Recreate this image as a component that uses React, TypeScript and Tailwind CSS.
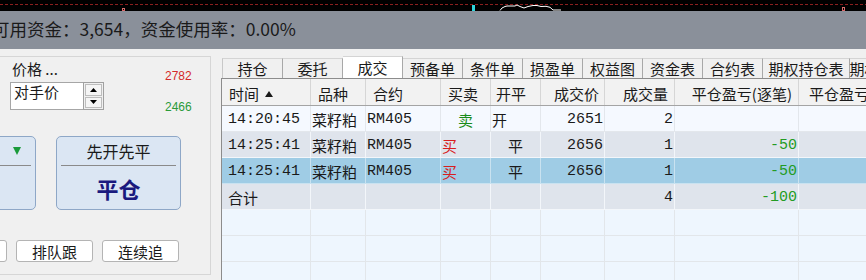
const mono = "font-['Liberation_Mono',monospace] text-[13px]";

const colW = [
  "w-[89px]",
  "w-[55px]",
  "w-[75px]",
  "w-[50px]",
  "w-[50px]",
  "w-[64px]",
  "w-[70px]",
  "w-[124px]",
  "w-[124px]",
];

type Cell = { t?: string; k?: string };
type Row = { bg: string; line: string; cells: Cell[] };

const header: Cell[] = [
  { t: "时间", k: "pl-[7px]" },
  { t: "品种", k: "pl-[7px]" },
  { t: "合约", k: "pl-[7px]" },
  { t: "买卖", k: "pl-[7px]" },
  { t: "开平", k: "pl-[5px]" },
  { t: "成交价", k: "justify-end pr-[5px]" },
  { t: "成交量", k: "justify-end pr-[6px]" },
  { t: "平仓盈亏(逐笔)", k: "justify-end pr-[6px]" },
  { t: "平仓盈亏(逐日)", k: "pl-[10px]" },
];

const trade = (time: string, side: Cell, oc: Cell, price: string, vol: string, pnl: string): Cell[] => [
  { t: time, k: `${mono} pl-[6px]` },
  { t: "菜籽粕", k: "pl-[1px]" },
  { t: "RM405", k: `${mono} pl-[1px]` },
  side,
  oc,
  { t: price, k: `${mono} justify-end pr-[1px]` },
  { t: vol, k: `${mono} justify-end pr-[1px]` },
  { t: pnl, k: `${mono} justify-end pr-[1px] text-[#239b23]` },
  {},
];

const rows: Row[] = [
  {
    bg: "bg-[#f5f9ff]",
    line: "border-[#e3e7ec]",
    cells: trade(
      "14:20:45",
      { t: "卖", k: "justify-center text-[#1a8c1a]" },
      { t: "开", k: "pl-[1px]" },
      "2651",
      "2",
      ""
    ),
  },
  {
    bg: "bg-[#dfe4ec]",
    line: "border-[#f3f6fa]",
    cells: trade(
      "14:25:41",
      { t: "买", k: "pl-[1px] text-[#d81e1e]" },
      { t: "平", k: "justify-center" },
      "2656",
      "1",
      "-50"
    ),
  },
  {
    bg: "bg-[#9fcce5]",
    line: "border-[#c9e2f0]",
    cells: trade(
      "14:25:41",
      { t: "买", k: "pl-[1px] text-[#d81e1e]" },
      { t: "平", k: "justify-center" },
      "2656",
      "1",
      "-50"
    ),
  },
  {
    bg: "bg-[#dfe4ec]",
    line: "border-[#f3f6fa]",
    cells: [
      { t: "合计", k: "pl-[6px]" },
      {},
      {},
      {},
      {},
      {},
      { t: "4", k: `${mono} justify-end pr-[1px]` },
      { t: "-100", k: `${mono} justify-end pr-[1px] text-[#239b23]` },
      {},
    ],
  },
];

const emptyRow: Row = {
  bg: "bg-[#eef6fe]",
  line: "border-[#e2e6ea]",
  cells: Array.from({ length: 9 }, () => ({})),
};

const tabs = [
  "持仓",
  "委托",
  "成交",
  "预备单",
  "条件单",
  "损盈单",
  "权益图",
  "资金表",
  "合约表",
  "期权持仓表",
  "期权成交",
];

function TopStrip() {
  return (
    <div className="h-[11px] bg-black">
      <svg width="866" height="11" className="block">
        <line x1="0" y1="4.5" x2="866" y2="4.5" stroke="#8b1f1f" strokeDasharray="3 2" />
        <rect x="122.5" y="8.5" width="2" height="2.5" fill="none" stroke="#d86a6a" />
        <rect x="472" y="5" width="3" height="6" fill="#2fd4dc" />
        <polyline
          points="500,10.5 502,8 505,6.5 507,6 515,6 517,5 520,6.5 524,8 528,6.5 533,5.5 537,5.5 541,6.5 546,6.3 550,7.3 553,10 561,10"
          fill="none"
          stroke="#ffffff"
        />
        <rect x="842.5" y="7.5" width="2" height="3.5" fill="none" stroke="#d86a6a" />
      </svg>
    </div>
  );
}

function Combo() {
  return (
    <div className="mt-[1px] flex h-[28px] w-[94px]">
      <div className="w-[73px] bg-white border border-r-0 border-[#a6a6a6] pl-[3px] text-[15px] leading-[18px]">
        对手价
      </div>
      <div className="w-[21px] border border-[#a0a0a0] bg-[#f0f0f0] flex flex-col p-[1px] gap-[1px]">
        <div className="flex-1 border border-[#bdbdbd] bg-[#f5f5f5] flex items-center justify-center">
          <svg width="7" height="4">
            <path d="M3.5 0L7 4H0Z" fill="#000" />
          </svg>
        </div>
        <div className="flex-1 border border-[#bdbdbd] bg-[#f5f5f5] flex items-center justify-center">
          <svg width="7" height="4">
            <path d="M0 0H7L3.5 4Z" fill="#000" />
          </svg>
        </div>
      </div>
    </div>
  );
}

function BigButton({ top, topCls, bottom }: { top: React.ReactNode; topCls: string; bottom: string }) {
  return (
    <div className="w-[125px] h-[74px] shrink-0 rounded-[5px] border border-[#8ea7c7] bg-[#dbe6f3] flex flex-col">
      <div className={`h-[28px] flex items-center text-[16px] leading-none ${topCls}`}>{top}</div>
      <div className="mx-[4px] h-px bg-[#8a8a8a]" />
      <div className="flex-1 flex items-center justify-center text-[22px] font-bold leading-none text-[#1a1a7e]">
        {bottom}
      </div>
    </div>
  );
}

function LeftPanel() {
  return (
    <div className="mt-[7px] w-[211px] h-[219px] shrink-0 border-t border-r border-b border-[#d6d6d6] overflow-hidden">
      <div className="flex h-[53px]">
        <div className="w-[165px] pl-[10px]">
          <div className="h-[24px] leading-[24px] pl-[2px] text-[15px]">价格 ...</div>
          <Combo />
        </div>
        <div className="flex flex-col pt-[11px] gap-[15px] text-[12px] leading-[16px] font-['Liberation_Sans',sans-serif]">
          <span className="text-[#d42a2a]">2782</span>
          <span className="text-[#2a9a3a]">2466</span>
        </div>
      </div>

      <div className="mt-[26px] -ml-[89px] flex gap-[20px]">
        <BigButton
          topCls="justify-end pr-[14px]"
          top={
            <svg width="8" height="8">
              <path d="M0 0H8L4 8Z" fill="#1a9a3a" />
            </svg>
          }
          bottom=""
        />
        <BigButton topCls="justify-center" top="先开先平" bottom="平仓" />
      </div>

      <div className="mt-[30px] -ml-[70px] flex gap-[9px]">
        {["", "排队跟", "连续追"].map((b, i) => (
          <div
            key={i}
            className="w-[77px] h-[22px] shrink-0 rounded-[3px] border border-[#b4b4b4] bg-white flex items-center justify-center text-[15px] leading-none"
          >
            {b}
          </div>
        ))}
      </div>
    </div>
  );
}

function TableRow({ row }: { row: Row }) {
  return (
    <div className={`flex h-[26px] border-b ${row.line} ${row.bg}`}>
      {row.cells.map((c, i) => (
        <div
          key={i}
          className={`${colW[i]} shrink-0 h-full border-r ${row.line} flex items-center pt-[2px] text-[15px] leading-none whitespace-nowrap ${c.k ?? ""}`}
        >
          {c.t}
        </div>
      ))}
    </div>
  );
}

function RightPanel() {
  return (
    <div className="ml-[10px] mt-[7px] flex-1 min-w-0 overflow-hidden">
      <div className="h-[22px] flex items-end pl-[1px]">
        {tabs.map((t, i) => {
          const active = i === 2;
          const w = i === 0 ? "w-[61px] border-l" : i === 9 ? "w-[87px]" : "w-[60px]";
          return (
            <div
              key={t}
              className={`${w} shrink-0 border-t border-r border-t-[#d4d4d4] border-r-[#a8a8a8] border-l-[#c8c8c8] flex items-center justify-center text-[15px] leading-none whitespace-nowrap ${
                active ? "h-[22px] bg-white" : "h-[20px]"
              }`}
            >
              {t}
            </div>
          );
        })}
      </div>

      <div className="border-t border-l border-[#8c8c8c] bg-[#eef6fe]">
        <div className="flex h-[27px] border-b border-[#a4a4a4] bg-[#f2f2f2]">
          {header.map((c, i) => (
            <div
              key={i}
              className={`${colW[i]} shrink-0 h-full border-r border-[#d6d6d6] flex items-center pt-[2px] text-[15px] leading-none whitespace-nowrap ${c.k}`}
            >
              {c.t}
              {i === 0 && (
                <svg width="8" height="6" className="ml-[6px] mt-[2px]">
                  <path d="M4 0L8 6H0Z" fill="#1a1a1a" />
                </svg>
              )}
            </div>
          ))}
        </div>
        {rows.map((r, i) => (
          <TableRow key={i} row={r} />
        ))}
        {[0, 1, 2].map((i) => (
          <TableRow key={`e${i}`} row={emptyRow} />
        ))}
      </div>
    </div>
  );
}

export default function App() {
  return (
    <div className="w-[866px] h-[280px] overflow-hidden bg-[#f0f0f0] font-['Noto_Sans_CJK_SC',sans-serif] text-[#1a1a1a]">
      <TopStrip />
      <div className="h-[38px] bg-[#8a909a] flex items-center pb-[3px] text-[17.5px] leading-none whitespace-nowrap">
        <span className="-ml-[8px]">可用资金：3,654，资金使用率：0.00%</span>
      </div>
      <div className="flex">
        <LeftPanel />
        <RightPanel />
      </div>
    </div>
  );
}
